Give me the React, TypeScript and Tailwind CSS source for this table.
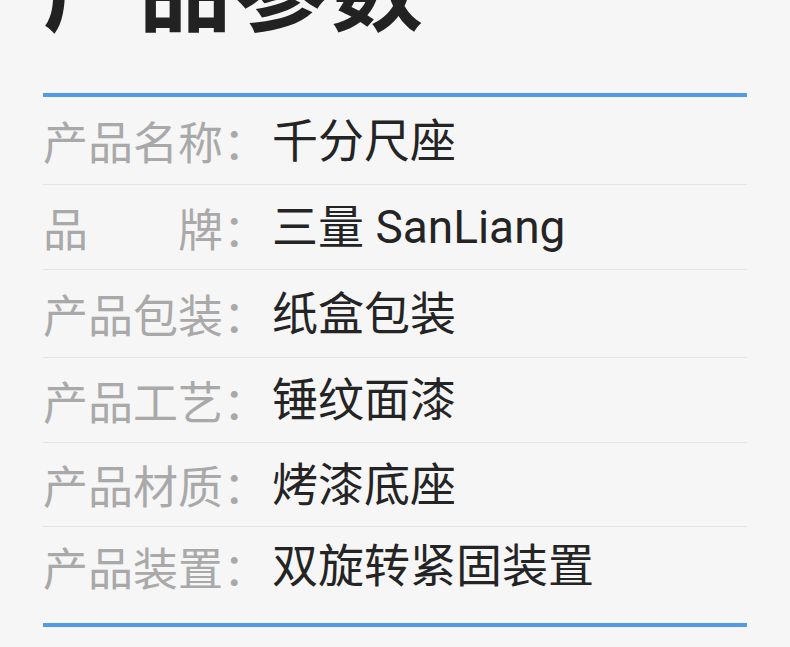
const rows: { label: string; value: string; h: string }[] = [
  { label: "产品名称", value: "千分尺座", h: "h-[88px] border-b" },
  { label: "品牌", value: "三量 SanLiang", h: "h-[85px] border-b" },
  { label: "产品包装", value: "纸盒包装", h: "h-[88px] border-b" },
  { label: "产品工艺", value: "锤纹面漆", h: "h-[85px] border-b" },
  { label: "产品材质", value: "烤漆底座", h: "h-[84px] border-b" },
  { label: "产品装置", value: "双旋转紧固装置", h: "h-[78px]" },
];

export default function App() {
  return (
    <div className="min-h-[647px] w-[790px] overflow-hidden bg-[#f6f6f6] px-[43px] font-['Noto_Sans_CJK_SC',sans-serif]">
      <h1 className="-mt-[62px] text-[92px] font-bold leading-none tracking-[4px] text-[#222]">
        产品参数
      </h1>

      <div className="mt-[63px] h-[4px] w-[704px] bg-[#4f9be6]" />

      <div className="w-[704px]">
        {rows.map(({ label, value, h }) => (
          <div
            key={label}
            className={`flex items-center border-[#e4e4e4] text-[45px] leading-none ${h}`}
          >
            <div className="flex w-[180px] justify-between text-[#a9a9a9]">
              {label.split("").map((ch) => (
                <span key={ch}>{ch}</span>
              ))}
            </div>
            <span className="text-[#a9a9a9]">：</span>
            <span className="ml-[4px] font-['Roboto','Noto_Sans_CJK_SC',sans-serif] text-[46px] text-[#242424]">
              {value}
            </span>
          </div>
        ))}
      </div>

      <div className="mt-[18px] h-[4px] w-[704px] bg-[#4f9be6]" />
    </div>
  );
}
